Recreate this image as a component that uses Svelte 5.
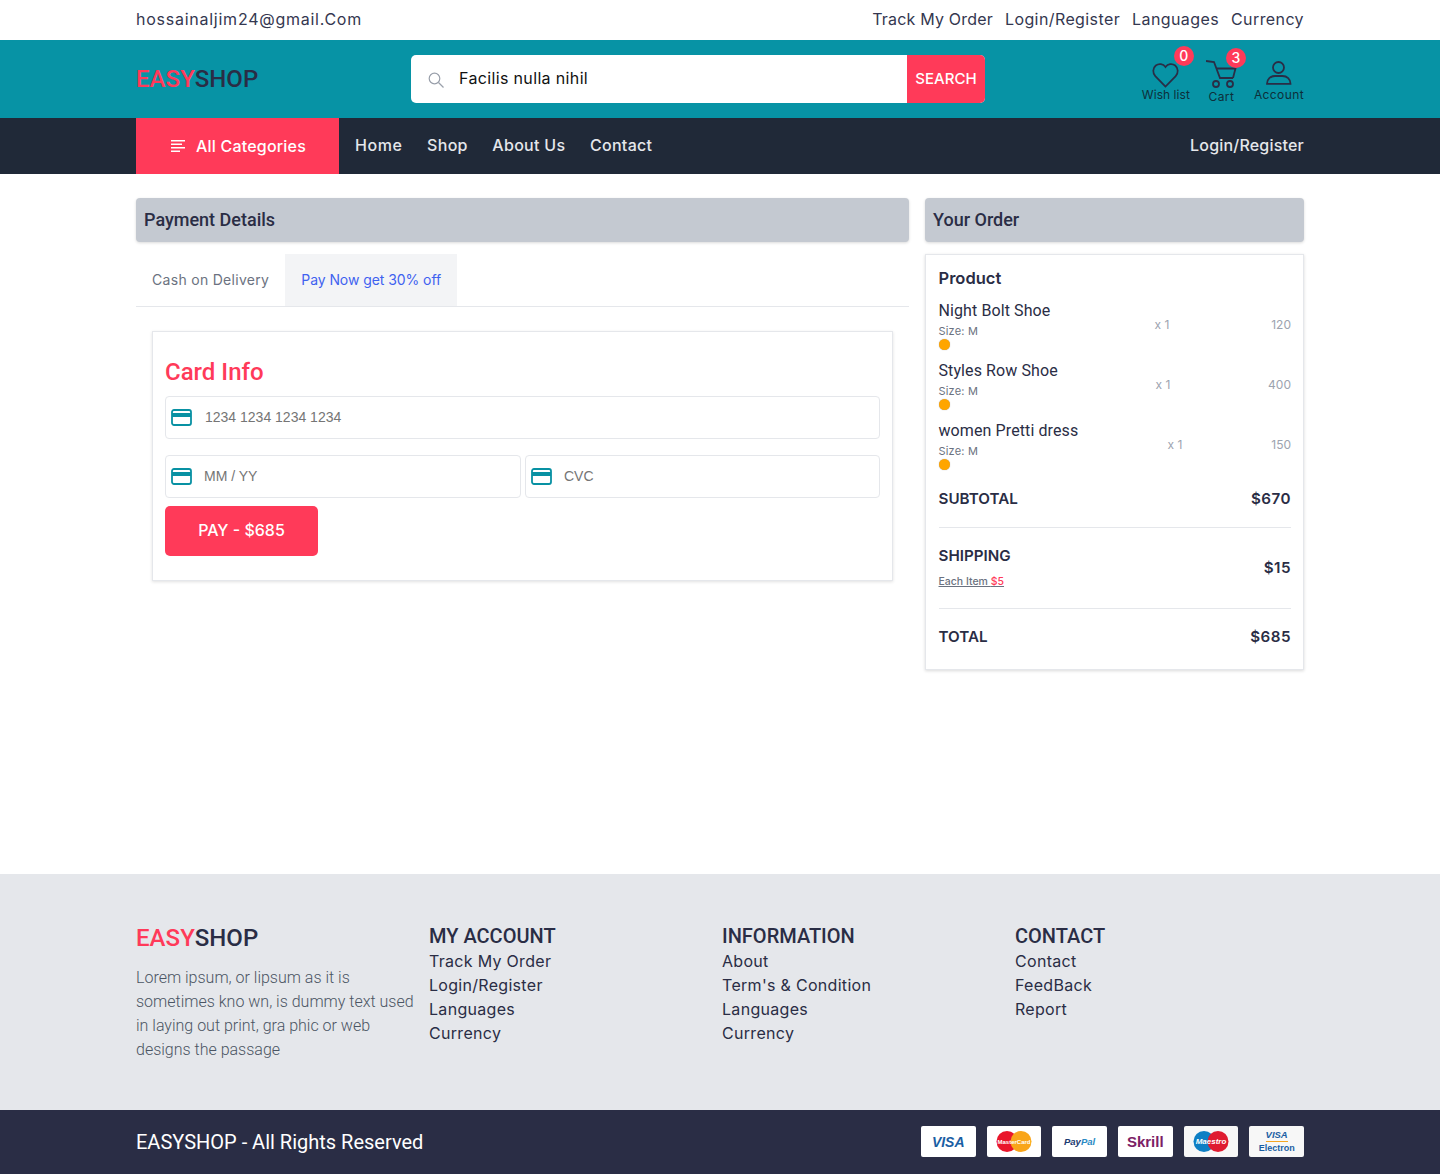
<script>
  const topLinks = ["Track My Order", "Login/Register", "Languages", "Currency"];
  const navLinks = ["Home", "Shop", "About Us", "Contact"];
  const products = [
    { name: "Night Bolt Shoe", qtyOffset: 216, price: 120 },
    { name: "Styles Row Shoe", qtyOffset: 217, price: 400 },
    { name: "women Pretti dress", qtyOffset: 229, price: 150 }
  ];
  const footerCols = [
    { title: "MY ACCOUNT", links: ["Track My Order", "Login/Register", "Languages", "Currency"] },
    { title: "INFORMATION", links: ["About", "Term's & Condition", "Languages", "Currency"] },
    { title: "CONTACT", links: ["Contact", "FeedBack", "Report"] }
  ];
</script>

{#snippet cardIcon()}
  <svg class="card-icon" width="21" height="17" viewBox="0 0 21 17">
    <rect x="1" y="1" width="19" height="15" rx="2" fill="none" stroke="#0891a3" stroke-width="1.8" />
    <rect x="1" y="4" width="19" height="4" fill="#0891a3" />
  </svg>
{/snippet}

<div class="page">
  <div class="topbar">
    <div class="wrap between">
      <span class="mail">hossainaljim24@gmail.Com</span>
      <div class="toplinks">
        {#each topLinks as link}
          <span>{link}</span>
        {/each}
      </div>
    </div>
  </div>

  <header class="header">
    <div class="wrap between">
      <div class="logo"><span class="red">EASY</span>SHOP</div>
      <div class="search">
        <svg class="search-icon" width="16" height="16" viewBox="0 0 16 16" fill="none" stroke="#9aa0ab" stroke-width="1.2">
          <circle cx="6.5" cy="6.5" r="5.3" />
          <path d="M10.5 10.5 15.5 15.5" />
        </svg>
        <span class="search-text">Facilis nulla nihil</span>
        <span class="search-btn">SEARCH</span>
      </div>
      <div class="actions">
        <div class="action wish">
          <svg width="27" height="26" viewBox="0 0 28 27" fill="none" stroke="#2a2d45" stroke-width="1.8">
            <path d="M14 25.5 3.4 14.6C.4 11.4.7 6.3 3.900 3.600 7 1.200 11.600 1.700 14 5.100 16.400 1.700 21 1.200 24.100 3.600c3.200 2.700 3.500 7.800.5 11Z" />
          </svg>
          <span class="badge">0</span>
          <span class="action-label">Wish list</span>
        </div>
        <div class="action cart">
          <svg width="31" height="28" viewBox="0 0 31 28" fill="none" stroke="#2a2d45" stroke-width="1.8">
            <path d="M0 1 8 2l6 16h13" />
            <path d="M11 8.500h18.500L27 18" />
            <circle cx="10" cy="24" r="3" />
            <circle cx="24" cy="24" r="3" />
          </svg>
          <span class="badge">3</span>
          <span class="action-label">Cart</span>
        </div>
        <div class="action account">
          <svg width="26" height="24" viewBox="0 0 26 24" fill="none" stroke="#2a2d45" stroke-width="1.8">
            <circle cx="12.500" cy="6.500" r="5.500" />
            <path d="M1 22.800c0-4.500 3.500-7.800 8-7.800h7.500c4.500 0 8 3.300 8 7.800Z" />
          </svg>
          <span class="action-label">Account</span>
        </div>
      </div>
    </div>
  </header>

  <nav class="nav">
    <div class="wrap between">
      <div class="nav-left">
        <div class="categories">
          <svg width="14" height="14" viewBox="0 0 14 14" fill="#fff">
            <rect y="1" width="14" height="1.500" />
            <rect y="4.500" width="11" height="1.500" />
            <rect y="8" width="14" height="1.500" />
            <rect y="11.500" width="9" height="1.500" />
          </svg>
          All Categories
        </div>
        {#each navLinks as link}
          <span class="nav-link">{link}</span>
        {/each}
      </div>
      <span class="nav-link login">Login/Register</span>
    </div>
  </nav>

  <main class="wrap main">
    <section class="left">
      <h2 class="panel-title">Payment Details</h2>
      <div class="tabs">
        <span class="tab">Cash on Delivery</span>
        <span class="tab active">Pay Now get 30% off</span>
      </div>
      <div class="card-box">
        <h3 class="card-title">Card Info</h3>
        <div class="field full">
          {@render cardIcon()}
          <span class="placeholder">1234 1234 1234 1234</span>
        </div>
        <div class="field-row">
          <div class="field">
            {@render cardIcon()}
            <span class="placeholder">MM / YY</span>
          </div>
          <div class="field">
            {@render cardIcon()}
            <span class="placeholder">CVC</span>
          </div>
        </div>
        <button class="pay">PAY - $685</button>
      </div>
    </section>

    <aside class="right">
      <h2 class="panel-title">Your Order</h2>
      <div class="order">
        <div class="order-head">Product</div>
        {#each products as p}
          <div class="item">
            <div class="item-info">
              <div class="item-name">{p.name}</div>
              <div class="item-size">Size: M</div>
              <div class="dot"></div>
            </div>
            <div class="item-qty" style="left: {p.qtyOffset}px">x 1</div>
            <div class="item-price">{p.price}</div>
          </div>
        {/each}
        <div class="sum first">
          <span class="sum-label">SUBTOTAL</span>
          <span class="sum-val">$670</span>
        </div>
        <div class="sum shipping">
          <div>
            <div class="sum-label">SHIPPING</div>
            <div class="each">Each Item <span class="red">$5</span></div>
          </div>
          <span class="sum-val">$15</span>
        </div>
        <div class="sum last">
          <span class="sum-label">TOTAL</span>
          <span class="sum-val">$685</span>
        </div>
      </div>
    </aside>
  </main>

  <footer class="footer">
    <div class="wrap footer-grid">
      <div>
        <div class="logo foot-logo"><span class="red">EASY</span>SHOP</div>
        <p class="about">Lorem ipsum, or lipsum as it is sometimes kno wn, is dummy text used in laying out print, gra phic or web designs the passage</p>
      </div>
      {#each footerCols as col}
        <div>
          <h4 class="foot-title">{col.title}</h4>
          {#each col.links as link}
            <div class="foot-link">{link}</div>
          {/each}
        </div>
      {/each}
    </div>
  </footer>

  <div class="bottom">
    <div class="wrap between">
      <span class="rights">EASYSHOP - All Rights Reserved</span>
      <div class="pays">
        <div class="paycard"><span class="visa">VISA</span></div>
        <div class="paycard">
          <svg width="36" height="21" viewBox="0 0 36 21">
            <circle cx="11" cy="10.500" r="10.500" fill="#e9162b" />
            <circle cx="25" cy="10.500" r="10.500" fill="#f9a51a" />
            <text x="18" y="12.500" text-anchor="middle" class="svg-mini" fill="#fff">MasterCard</text>
          </svg>
        </div>
        <div class="paycard"><span class="paypal"><b>Pay</b><i>Pal</i></span></div>
        <div class="paycard"><span class="skrill">Skrill</span></div>
        <div class="paycard tint">
          <svg width="36" height="21" viewBox="0 0 36 21">
            <circle cx="11" cy="10.500" r="10.500" fill="#0e7fc4" />
            <circle cx="25" cy="10.500" r="10.500" fill="#df1b30" />
            <text x="18" y="13" text-anchor="middle" class="svg-mini big" fill="#fff">Maestro</text>
          </svg>
        </div>
        <div class="paycard tint electron">
          <span class="visa tiny">VISA</span>
          <span class="elec">Electron</span>
        </div>
      </div>
    </div>
  </div>
</div>

<style>
  :global(body) {
    margin: 0;
    background: #fff;
  }

  .page {
    font-family: "Inter", "Liberation Sans", sans-serif;
    color: #2a2d45;
  }

  .wrap {
    width: 1168px;
    margin: 0 auto;
  }

  .between {
    display: flex;
    align-items: center;
    justify-content: space-between;
    height: 100%;
  }

  .red {
    color: #ff3a59;
  }

  .topbar {
    height: 40px;
    box-sizing: border-box;
    padding-bottom: 2px;
    font-size: 16px;
    color: #343750;
  }

  .mail {
    letter-spacing: 0.75px;
  }

  .toplinks {
    display: flex;
    gap: 12px;
    letter-spacing: 0.4px;
  }

  .toplinks span:first-child {
    letter-spacing: 0.2px;
  }

  .header {
    height: 78px;
    background: #0793a5;
  }

  .logo {
    font-family: "Roboto", sans-serif;
    font-weight: 500;
    font-size: 24px;
    letter-spacing: 0.05px;
    color: #2a2d45;
    width: 275px;
  }

  .search {
    display: flex;
    align-items: center;
    width: 574px;
    height: 48px;
    background: #fff;
    border-radius: 5px;
    overflow: hidden;
  }

  .search-icon {
    margin-left: 17px;
    margin-top: 2px;
  }

  .search-text {
    flex: 1;
    margin-left: 15px;
    padding-bottom: 2px;
    font-size: 16px;
    letter-spacing: 0.35px;
    color: #111;
  }

  .search-btn {
    width: 78px;
    height: 100%;
    box-sizing: border-box;
    padding-bottom: 2px;
    background: #ff3a59;
    color: #fff;
    font-size: 15px;
    font-weight: 500;
    display: flex;
    align-items: center;
    justify-content: center;
  }

  .actions {
    display: flex;
    align-items: flex-end;
    gap: 16px;
    width: 319px;
    justify-content: flex-end;
    height: 48px;
  }

  .action {
    position: relative;
    display: flex;
    flex-direction: column;
    align-items: center;
  }

  .action-label {
    font-size: 12px;
    line-height: 14px;
    letter-spacing: 0.4px;
    color: #0d2f3a;
    white-space: nowrap;
  }

  .wish {
    top: -1px;
  }

  .wish .action-label {
    letter-spacing: 0.05px;
  }

  .cart {
    top: 1px;
  }

  .cart svg {
    margin-bottom: 2px;
  }

  .account {
    top: -1px;
    margin-left: 1px;
  }

  .account svg {
    margin-bottom: 3px;
  }

  .badge {
    position: absolute;
    width: 20px;
    height: 20px;
    border-radius: 50%;
    background: #ff3a59;
    color: #fff;
    font-size: 14px;
    font-weight: 500;
    line-height: 20px;
    text-align: center;
  }

  .wish .badge {
    top: -16px;
    left: 32px;
  }

  .cart .badge {
    top: -12px;
    left: 20px;
  }

  .nav {
    height: 56px;
    background: #202938;
  }

  .nav-left {
    display: flex;
    align-items: center;
    height: 100%;
  }

  .categories {
    width: 203px;
    height: 100%;
    box-sizing: border-box;
    background: #ff3a59;
    color: #fff;
    display: flex;
    align-items: center;
    gap: 11px;
    padding: 0 0 1px 35px;
    font-size: 16px;
    font-weight: 500;
    letter-spacing: 0.2px;
  }

  .nav-link {
    color: #e5e7eb;
    font-size: 16px;
    font-weight: 500;
    letter-spacing: 0.3px;
    margin-left: 24.5px;
    padding-bottom: 2px;
  }

  .categories + .nav-link {
    margin-left: 16px;
    letter-spacing: 0.6px;
  }

  .login {
    margin-left: 0;
    letter-spacing: 0.2px;
  }

  .main {
    display: flex;
    gap: 16px;
    padding-top: 24px;
    height: 700px;
    box-sizing: border-box;
  }

  .left {
    width: 773px;
  }

  .right {
    width: 379px;
  }

  .panel-title {
    margin: 0;
    height: 44px;
    box-sizing: border-box;
    padding: 0 8px 2px;
    display: flex;
    align-items: center;
    background: #c4c9d1;
    border-radius: 4px;
    box-shadow: 0 1px 3px rgba(0, 0, 0, 0.15);
    font-family: "Roboto", sans-serif;
    font-size: 18px;
    font-weight: 500;
    color: #2a2d45;
  }

  .tabs {
    display: flex;
    margin-top: 12px;
    height: 53px;
    box-sizing: border-box;
    border-bottom: 1px solid #e5e7eb;
  }

  .tab {
    padding: 0 16px 2px;
    display: flex;
    align-items: center;
    font-size: 14px;
    letter-spacing: 0.3px;
    color: #6b7280;
    height: 52px;
    box-sizing: border-box;
  }

  .tab.active {
    background: #f3f4f6;
    color: #3f62f0;
    letter-spacing: -0.07px;
  }

  .card-box {
    margin: 24px 16px 0;
    height: 250px;
    box-sizing: border-box;
    border: 1px solid #e5e7eb;
    box-shadow: 0 1px 3px rgba(0, 0, 0, 0.12);
    padding: 12px;
  }

  .card-title {
    margin: 12px 0 8px;
    height: 32px;
    line-height: 32px;
    font-family: "Roboto", sans-serif;
    font-size: 24px;
    font-weight: 500;
    color: #ff3a59;
  }

  .field {
    height: 43px;
    box-sizing: border-box;
    border: 1px solid #e5e7eb;
    border-radius: 4px;
    display: flex;
    align-items: center;
    padding-left: 5px;
    gap: 12px;
  }

  .field.full {
    gap: 13px;
  }

  .field-row {
    display: grid;
    grid-template-columns: 356px 355px;
    gap: 4px;
    margin-top: 16px;
  }

  .card-icon {
    flex: none;
  }

  .placeholder {
    font-family: "Liberation Sans", sans-serif;
    font-size: 14px;
    color: #757575;
    padding-bottom: 2px;
  }

  .pay {
    margin-top: 8px;
    width: 153px;
    height: 50px;
    padding: 0 0 2px;
    border: 0;
    border-radius: 5px;
    background: #ff3a59;
    color: #fff;
    font-family: "Inter", sans-serif;
    font-size: 16px;
    font-weight: 500;
  }

  .order {
    margin-top: 12px;
    height: 416px;
    box-sizing: border-box;
    border: 1px solid #e5e7eb;
    box-shadow: 0 1px 3px rgba(0, 0, 0, 0.15);
    padding: 13px 12px 0 12.5px;
  }

  .order-head {
    font-size: 16.5px;
    font-weight: 600;
    line-height: 20px;
    height: 25px;
  }

  .item {
    position: relative;
    height: 60px;
  }

  .item-info {
    padding-top: 8px;
  }

  .item-name {
    font-family: "Roboto", sans-serif;
    font-size: 16px;
    font-weight: 400;
    line-height: 20px;
    letter-spacing: 0.1px;
  }

  .item-size {
    font-size: 11px;
    line-height: 20px;
    color: #6b7280;
    letter-spacing: 0.2px;
  }

  .dot {
    width: 11px;
    height: 11px;
    margin-top: -2px;
    border-radius: 50%;
    background: #ffa500;
    box-shadow: 0 0 1px #999;
  }

  .item-qty {
    position: absolute;
    top: 24px;
    font-size: 12px;
    color: #9ca3af;
  }

  .item-price {
    position: absolute;
    top: 24px;
    right: 0;
    font-size: 12px;
    color: #9ca3af;
  }

  .sum {
    display: flex;
    align-items: center;
    justify-content: space-between;
  }

  .sum.first {
    height: 38px;
    padding-top: 16px;
    align-items: flex-start;
    border-bottom: 1px solid #e5e7eb;
  }

  .sum.shipping {
    height: 81px;
    box-sizing: border-box;
    padding-bottom: 1px;
    border-bottom: 1px solid #e5e7eb;
  }

  .sum.last {
    height: 56px;
  }

  .sum-label {
    font-size: 15.2px;
    font-weight: 600;
    line-height: 20px;
  }

  .sum-val {
    font-size: 15.2px;
    font-weight: 600;
    line-height: 20px;
    letter-spacing: 0.5px;
  }

  .each {
    margin-top: 9px;
    font-size: 10.5px;
    font-weight: 500;
    line-height: 14px;
    color: #6b7280;
    text-decoration: underline;
  }

  .footer {
    height: 236px;
    background: #e5e7eb;
    box-sizing: border-box;
    padding-top: 48px;
  }

  .footer-grid {
    display: grid;
    gap: 16px;
    grid-template-columns: 277px 277px 277px 277px;
  }

  .foot-logo {
    width: auto;
    line-height: 32px;
  }

  .about {
    margin: 12px -4px 0 0;
    font-family: "Roboto", sans-serif;
    font-weight: 300;
    font-size: 16px;
    line-height: 24px;
    color: #4b5563;
  }

  .foot-title {
    margin: 0;
    padding-top: 2px;
    font-family: "Roboto", sans-serif;
    font-size: 20px;
    font-weight: 500;
    line-height: 25px;
    color: #2a2d45;
  }

  .foot-link {
    font-size: 16px;
    line-height: 24px;
    letter-spacing: 0.3px;
    color: #2a2d45;
  }

  .bottom {
    height: 64px;
    background: #2a2d45;
  }

  .rights {
    font-family: "Roboto", sans-serif;
    font-size: 20px;
    color: #fff;
  }

  .pays {
    display: flex;
    gap: 11px;
    margin-top: -1px;
  }

  .paycard {
    position: relative;
    width: 54.7px;
    height: 31px;
    background: #fff;
    border-radius: 2px;
    display: flex;
    align-items: center;
    justify-content: center;
    overflow: hidden;
  }

  .paycard.tint {
    background: #f7f7f7;
  }

  .visa {
    font-family: "Liberation Sans", sans-serif;
    font-style: italic;
    font-weight: 700;
    font-size: 14px;
    color: #1a5ea3;
  }

  .paypal {
    font-family: "Liberation Sans", sans-serif;
    font-size: 9.5px;
    font-style: italic;
    font-weight: 700;
  }

  .paypal b {
    color: #1b3a70;
  }

  .paypal i {
    color: #2a8ac4;
  }

  .skrill {
    font-family: "Liberation Sans", sans-serif;
    font-size: 15px;
    font-weight: 700;
    color: #7c2165;
  }

  .svg-mini {
    font-family: "Liberation Sans", sans-serif;
    font-size: 6px;
    font-weight: 700;
  }

  .svg-mini.big {
    font-size: 8px;
    font-style: italic;
  }

  .electron {
    flex-direction: column;
  }

  .visa.tiny {
    font-size: 9.5px;
    line-height: 12px;
    border-bottom: 1px solid #f5a623;
  }

  .elec {
    font-family: "Liberation Sans", sans-serif;
    font-size: 9px;
    font-weight: 700;
    line-height: 13px;
    color: #1a5ea3;
  }
</style>
